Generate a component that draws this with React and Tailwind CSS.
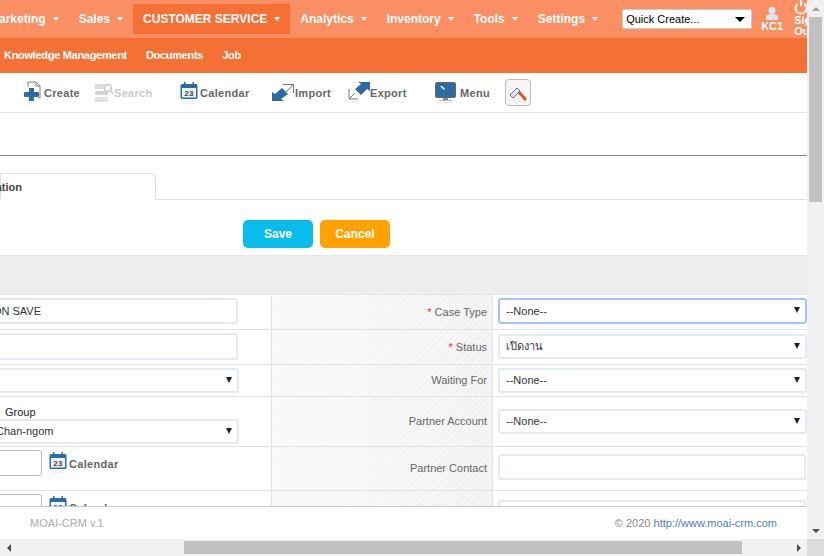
import React from 'react';

const Caret = () => <span className="ml-[7px] inline-block w-0 h-0 border-x-[3px] border-x-transparent border-t-[4px] border-t-white" />;

const navItems = ['Marketing', 'Sales', 'CUSTOMER SERVICE', 'Analytics', 'Inventory', 'Tools', 'Settings'];

const CreateIcon = () => (
    <svg width="19" height="24" viewBox="0 0 19 24" className="shrink-0">
        <path d="M5 6V1h8l4 4v12h-2M13 1v4h4" fill="none" stroke="#808080" strokeWidth="1" />
        <path d="M6 7h5v4h4a1 1 0 0 1 1 1v3a1 1 0 0 1-1 1h-4v4H6v-4H2a1 1 0 0 1-1-1v-3a1 1 0 0 1 1-1h4z" fill="#2b6ca3" />
        <path d="M5 22h6M7 23h3" stroke="#e2e2e2" strokeWidth="1" />
    </svg>
);

const SearchIcon = () => (
    <svg width="19" height="20" viewBox="0 0 19 20" className="shrink-0 -mr-[2px]">
        <rect x="0" y="1" width="10" height="5" fill="#dcdcdc" />
        <rect x="0" y="8" width="13" height="4" fill="#d5d5d5" />
        <rect x="0" y="14" width="13" height="5" fill="#e2e2e2" />
        <circle cx="13" cy="5" r="3.5" fill="#fff" stroke="#c8c8c8" strokeWidth="1.5" />
        <path d="M15.5 8l3 3" stroke="#c8c8c8" strokeWidth="1.5" />
    </svg>
);

const CalendarIcon = () => (
    <svg width="18" height="24" viewBox="0 0 18 24" className="shrink-0">
        <rect x="0.5" y="3" width="17" height="15" rx="1.5" fill="#2b6ca3" />
        <rect x="2" y="7" width="14" height="9.5" fill="#eef3f8" />
        <rect x="4" y="1" width="1.5" height="4" fill="#2b6ca3" />
        <rect x="12.5" y="1" width="1.5" height="4" fill="#2b6ca3" />
        <text x="9" y="15" textAnchor="middle" fontSize="8" fontWeight="700" fontFamily="Liberation Sans" fill="#444">23</text>
        <path d="M1 20h16M3 22h12" stroke="#e8e8e8" strokeWidth="1" />
    </svg>
);

const ImportIcon = () => (
    <svg width="23" height="19" viewBox="0 0 23 19" className="shrink-0 -mr-[2px]">
        <path d="M0 18V9l3 2 7-6 6 6-7 5 3 2z" fill="#2b6ca3" />
        <path d="M11 1.5h10.5V10M21.5 1.5l-8 8" fill="none" stroke="#777" strokeWidth="1" />
    </svg>
);

const ExportIcon = () => (
    <svg width="22" height="24" viewBox="0 0 22 24" className="shrink-0 -mr-[2px]">
        <path d="M22 1v9l-3-2-6 6-6-6 6-5-3-2z" fill="#2b6ca3" />
        <path d="M1 8v10h9M1 18l6-6" fill="none" stroke="#777" strokeWidth="1" />
        <path d="M2 21h8" stroke="#e2e2e2" strokeWidth="1" />
    </svg>
);

const MenuIcon = () => (
    <svg width="21" height="22" viewBox="0 0 21 22" className="shrink-0">
        <rect x="0.5" y="0.5" width="20" height="15" rx="1.5" fill="#2b6ca3" stroke="#666" />
        <path d="M5 4h2l3 3-1 1-3-3z" fill="#fff" />
        <rect x="8" y="16" width="5" height="2" fill="#888" />
        <rect x="4" y="18" width="13" height="1" fill="#bbb" />
        <rect x="2" y="20" width="17" height="1" fill="#e8e8e8" />
    </svg>
);

const Tool = ({ icon, label, className, faded }) => (
    <div className={`flex items-center gap-[2px] text-[11px] font-bold tracking-[0.3px] ${faded ? 'text-[#c9c9c9]' : 'text-[#666]'} ${className}`}>
        {icon}
        <span className="mt-[2px]">{label}</span>
    </div>
);

const Select = ({ children, className, focused }) => (
    <div className={`flex items-center justify-between pl-[6px] pr-[5px] rounded-[3px] bg-white text-[11px] text-[#333] whitespace-nowrap ${focused ? 'border-2 border-[#a5c3f5]' : 'border-2 border-[#e3eaf3]'} ${className}`}>
        <span>{children}</span>
        <span className="w-0 h-0 border-x-[3.5px] border-x-transparent border-t-[6px] border-t-[#222] mb-[2px]" />
    </div>
);

const Row = ({ height, left, label, required, right }) => (
    <div className={`flex border-b border-[#e2e2e2] ${height}`}>
        <div className="w-[272px] shrink-0 border-r border-[#e2e2e2] overflow-hidden">{left}</div>
        <div className="w-[221px] shrink-0 border-r border-[#e2e2e2] flex items-center justify-end pr-[5px] text-[11px] text-[#666] bg-[image:repeating-linear-gradient(135deg,#ffffff00_0,#ffffff00_2px,#ffffff66_2px,#ffffff66_4px),linear-gradient(90deg,#f8f8f8,#f0f0f0)]">
            {required && <span className="text-[#e33] mr-[3px]">*</span>}
            {label}
        </div>
        <div className="flex-1 min-w-0 overflow-hidden">{right}</div>
    </div>
);

const DateField = () => (
    <div className="flex items-start mt-[3px]">
        <div className="w-[62px] -ml-[20px] h-[26px] shrink-0 bg-white border border-[#bbb] rounded-[3px]" />
        <div className="ml-[7px] mt-[1px]">
            <Tool icon={<CalendarIcon />} label="Calendar" />
        </div>
    </div>
);

export default function App() {
    return (
        <div className="w-[824px] h-[556px] overflow-hidden flex flex-col font-['Liberation_Sans',Arial,sans-serif]">
            <div className="flex flex-1 min-h-0">
                <div className="w-[807px] shrink-0 flex flex-col min-h-0 overflow-hidden">
                    {/* Top nav */}
                    <div className="h-[38px] shrink-0 bg-[#f98f62] flex items-center text-white text-[12px] font-bold">
                        <div className="flex -ml-[21px] items-center h-[30px]">
                            {navItems.map((name) => (
                                <div key={name} className={`h-full flex items-center px-[10px] whitespace-nowrap ${name === 'CUSTOMER SERVICE' ? 'bg-[#f47034]' : ''}`}>
                                    {name}
                                    <Caret />
                                </div>
                            ))}
                        </div>
                        <div className="ml-[14px] w-[130px] h-[20px] shrink-0 bg-white border border-[#ccc] rounded-[2px] flex items-center justify-between pl-[3px] pr-[6px] text-[11px] font-normal text-black">
                            <span>Quick Create...</span>
                            <span className="w-0 h-0 border-x-[5px] border-x-transparent border-t-[5px] border-t-black" />
                        </div>
                        <div className="ml-[9px] w-[22px] shrink-0 flex flex-col items-center leading-none">
                            <svg width="14" height="13" viewBox="0 0 14 13">
                                <circle cx="7" cy="3.5" r="3.5" fill="#dbe6f4" />
                                <path d="M1 13v-3c0-2 2-3 6-3s6 1 6 3v3z" fill="#dbe6f4" />
                            </svg>
                            <span className="text-[11px] mt-[1px]">KC1</span>
                        </div>
                        <div className="ml-[11px] self-start flex flex-col items-start leading-[11px] text-[11px] font-bold whitespace-nowrap">
                            <svg width="14" height="15" viewBox="0 0 14 15" fill="none" stroke="#fff" strokeWidth="1.8">
                                <path d="M4 3.5a5.5 5.5 0 1 0 6 0" />
                                <path d="M7 0v6" />
                            </svg>
                            <span>Sign</span>
                            <span>Out</span>
                        </div>
                    </div>

                    {/* Sub nav */}
                    <div className="h-[35px] shrink-0 bg-[#f47034] flex items-center pl-[4px] gap-[19px] text-white text-[11px] font-bold tracking-[-0.3px]">
                        <span>Knowledge Management</span>
                        <span>Documents</span>
                        <span>Job</span>
                    </div>

                    {/* Toolbar */}
                    <div className="h-[40px] shrink-0 bg-white border-b border-[#e0e6f0] flex items-center pl-[23px]">
                        <Tool icon={<CreateIcon />} label="Create" className="w-[72px]" />
                        <Tool icon={<SearchIcon />} label="Search" className="w-[85px]" faded />
                        <Tool icon={<CalendarIcon />} label="Calendar" className="w-[92px]" />
                        <Tool icon={<ImportIcon />} label="Import" className="w-[76px]" />
                        <Tool icon={<ExportIcon />} label="Export" className="w-[87px]" />
                        <Tool icon={<MenuIcon />} label="Menu" className="w-[70px] gap-[4px]" />
                        <div className="w-[26px] h-[27px] rounded-[4px] border border-[#bbb] bg-[#f6f6f6] flex items-center justify-center">
                            <svg width="20" height="20" viewBox="0 0 20 20">
                                <path d="M9 7l9 10" stroke="#e2531c" strokeWidth="3" />
                                <path d="M2 12l7-7 3 3-7 7z" fill="#dfe6f5" stroke="#5c6fa8" strokeWidth="1" />
                            </svg>
                        </div>
                    </div>

                    {/* Title area */}
                    <div className="h-[43px] shrink-0 bg-white border-b border-[#808080]" />

                    {/* Tabs */}
                    <div className="h-[44px] shrink-0 bg-white border-b border-[#dfdfdf] flex items-end">
                        <div className="w-[156px] h-[27px] -mb-[1px] pt-[1px] bg-white border border-[#dfdfdf] border-b-white rounded-tr-[6px] flex items-center justify-end pr-[133px] text-[11px] font-bold text-[#444]">
                            <span className="whitespace-nowrap">ation</span>
                        </div>
                    </div>

                    {/* Buttons */}
                    <div className="h-[56px] shrink-0 bg-white flex items-start pt-[20px] pl-[243px] gap-[7px] border-b border-[#e3e8ef]">
                        <button className="w-[70px] h-[28px] rounded-[5px] bg-[#0abcec] text-white text-[12px] font-bold">Save</button>
                        <button className="w-[70px] h-[28px] rounded-[5px] bg-[#ffa200] text-white text-[12px] font-bold">Cancel</button>
                    </div>

                    {/* Section band */}
                    <div className="h-[39px] shrink-0 bg-[#ededed] border-b border-[#e0e6f0]" />

                    {/* Form */}
                    <div className="flex-1 min-h-0 overflow-hidden bg-white">
                        <Row
                            height="h-[35px]"
                            label="Case Type"
                            required
                            left={<div className="-ml-[20px] mr-[33px] mt-[3px] h-[26px] border-2 border-[#e3eaf3] rounded-[3px] flex items-center text-[11px] text-[#333] whitespace-nowrap justify-end pr-[195px]">ON SAVE</div>}
                            right={<Select focused className="ml-[5px] mt-[3px] h-[26px]">--None--</Select>}
                        />
                        <Row
                            height="h-[35px]"
                            label="Status"
                            required
                            left={<div className="-ml-[20px] mr-[33px] mt-[3px] h-[27px] border-2 border-[#e3eaf3] rounded-[3px]" />}
                            right={<Select className="ml-[5px] mt-[4px] h-[25px]">เปิดงาน</Select>}
                        />
                        <Row
                            height="h-[32px]"
                            label="Waiting For"
                            left={<Select className="-ml-[20px] mr-[32px] mt-[3px] h-[25px]"> </Select>}
                            right={<Select className="ml-[5px] mt-[3px] h-[25px]">--None--</Select>}
                        />
                        <Row
                            height="h-[50px]"
                            label="Partner Account"
                            left={
                                <div className="pt-[9px]">
                                    <div className="pl-[5px] text-[11px] leading-[13px] text-[#222]">Group</div>
                                    <Select className="-ml-[20px] mr-[32px] h-[25px]">
                                        <span className="ml-[8px]">Chan-ngom</span>
                                    </Select>
                                </div>
                            }
                            right={<Select className="ml-[5px] mt-[12px] h-[25px]">--None--</Select>}
                        />
                        <Row
                            height="h-[44px]"
                            label="Partner Contact"
                            left={<DateField />}
                            right={<div className="ml-[5px] mr-[1px] mt-[7px] h-[26px] border-2 border-[#e3eaf3] rounded-[3px]" />}
                        />
                        <Row
                            height="h-[44px]"
                            label=""
                            left={<DateField />}
                            right={<div className="ml-[5px] mr-[1px] mt-[9px] h-[26px] border-2 border-[#e3eaf3] rounded-[3px]" />}
                        />
                    </div>

                    {/* Footer */}
                    <div className="h-[33px] shrink-0 bg-white border-t border-[#c8c8c8] flex items-center justify-between pl-[30px] pr-[30px] text-[11px]">
                        <span className="text-[#aaa]">MOAI-CRM v.1</span>
                        <span className="text-[#888]">© 2020 <span className="text-[#4a80c0]">http://www.moai-crm.com</span></span>
                    </div>
                </div>

                {/* Vertical scrollbar */}
                <div className="w-[17px] shrink-0 bg-[#f1f1f1] flex flex-col">
                    <div className="h-[17px] flex items-center justify-center">
                        <span className="w-0 h-0 border-x-[4px] border-x-transparent border-b-[4px] border-b-[#a0a0a0]" />
                    </div>
                    <div className="ml-[2px] w-[13px] h-[185px] bg-[#c1c1c1]" />
                    <div className="flex-1" />
                    <div className="h-[17px] flex items-center justify-center">
                        <span className="w-0 h-0 border-x-[4px] border-x-transparent border-t-[4px] border-t-[#505050]" />
                    </div>
                </div>
            </div>

            {/* Horizontal scrollbar */}
            <div className="h-[17px] shrink-0 bg-[#f1f1f1] flex items-center">
                <div className="w-[17px] flex justify-center">
                    <span className="w-0 h-0 border-y-[4px] border-y-transparent border-r-[4px] border-r-[#505050]" />
                </div>
                <div className="ml-[167px] w-[558px] h-[13px] bg-[#c1c1c1]" />
                <div className="flex-1 flex justify-end">
                    <div className="w-[17px] flex justify-center">
                        <span className="w-0 h-0 border-y-[4px] border-y-transparent border-l-[4px] border-l-[#505050]" />
                    </div>
                </div>
                <div className="w-[17px] h-full bg-[#dcdcdc]" />
            </div>
        </div>
    );
}
